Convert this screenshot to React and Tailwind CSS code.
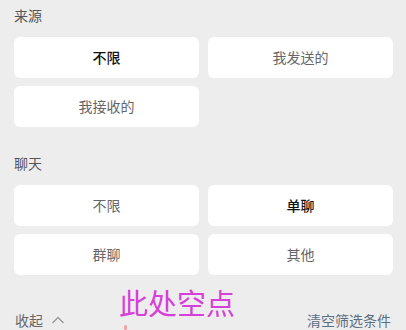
export default function App() {
  return (
    <div
      className="relative w-[406px] h-[330px] overflow-hidden bg-[#ededed] text-[14px]"
      style={{ fontFamily: '"Noto Sans CJK SC", "Noto Sans", sans-serif' }}
    >
      <Section title="来源" top="pt-[5px]">
        <Option active>不限</Option>
        <Option>我发送的</Option>
        <Option>我接收的</Option>
      </Section>

      <Section title="聊天" top="pt-[26px]">
        <Option>不限</Option>
        <Option active>单聊</Option>
        <Option>群聊</Option>
        <Option>其他</Option>
      </Section>

      <div className="mt-[35px] flex items-center justify-between pl-[15px] pr-[15px] leading-[20px]">
        <div className="flex items-center gap-[8px] text-[#666]">
          <span>收起</span>
          <svg width="14" height="10" viewBox="0 0 14 10" fill="none" stroke="#999" strokeWidth="1.4">
            <path d="M1.5 8 L7 2.5 L12.5 8" />
          </svg>
        </div>
        <span className="text-[#5d6f82]">清空筛选条件</span>
      </div>

      <div className="absolute left-[119px] top-[284px] text-[29px] leading-[36px] text-[#d63fd8]">此处空点</div>
      <div className="absolute left-[124px] top-[325px] w-[3px] h-[5px] rounded-full bg-[#f4a0a0]" />
    </div>
  );
}

function Section({ title, top, children }) {
  return (
    <div className={top}>
      <div className="pl-[14px] leading-[20px] text-[#555]">{title}</div>
      <div className="mt-[12px] grid grid-cols-2 gap-x-[9px] gap-y-[8px] pl-[14px] pr-[13px]">
        {children}
      </div>
    </div>
  );
}

function Option({ active, children }) {
  return (
    <div
      className={`h-[41px] rounded-[6px] bg-white flex items-center justify-center ${
        active ? "text-[#111] font-medium" : "text-[#666]"
      }`}
    >
      {children}
    </div>
  );
}
